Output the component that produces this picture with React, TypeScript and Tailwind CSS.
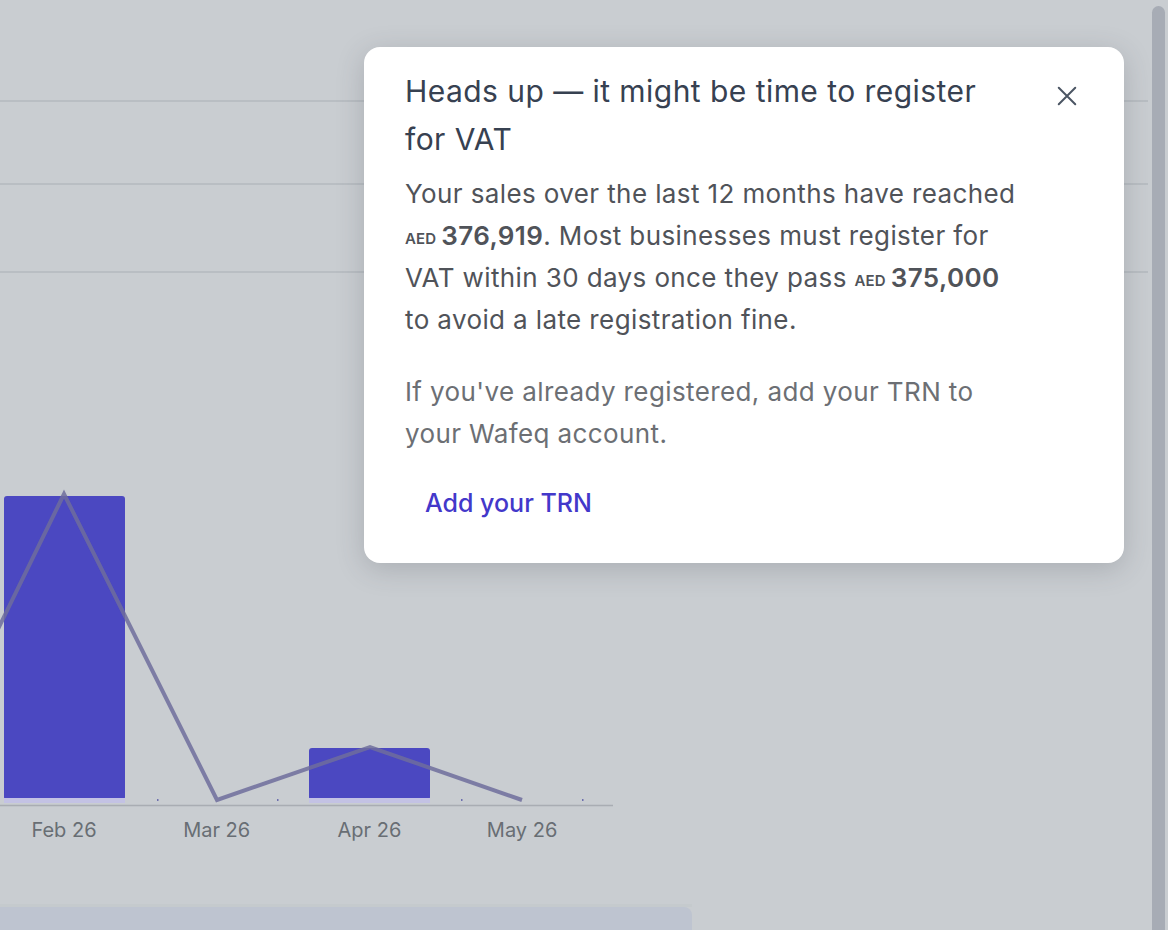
import React from "react";

const font = { fontFamily: "Inter, 'Noto Sans', sans-serif" };

function Amount({ value }: { value: string }) {
  return (
    <>
      <span className="inline-block text-[15px] leading-none font-semibold tracking-[0.01em] mr-[5px] align-[1px]">AED</span>
      <b className="font-semibold">{value}</b>
    </>
  );
}

function Chart() {
  const line = "-20,186 64,14 217,320 370,267 522,320";
  const labels = ["Feb 26", "Mar 26", "Apr 26", "May 26"];
  return (
    <div className="relative w-[620px]">
      <svg width="620" height="330" viewBox="0 0 620 330" className="block">
        <rect x="4" y="16" width="121" height="304" rx="3" fill="#4b48c1" />
        <rect x="4" y="318" width="121" height="5" fill="#c3c2e4" />
        <rect x="309" y="268" width="121" height="52" rx="3" fill="#4b48c1" />
        <rect x="309" y="318" width="121" height="5" fill="#c3c2e4" />
        {[157, 277, 461, 582].map((x) => (
          <rect key={x} x={x} y="319" width="1.5" height="2" fill="#6d6fae" />
        ))}
        <line x1="0" y1="325.5" x2="613" y2="325.5" stroke="#a9adb3" strokeWidth="1.5" />
        <polyline points={line} fill="none" stroke="#6f6d9c" strokeOpacity="0.85" strokeWidth="4" strokeLinejoin="miter" />
      </svg>
      <div className="relative h-[30px] mt-[5px] text-[20px] leading-[30px] text-[#686e74]">
        {labels.map((l, i) => (
          <div key={l} className="absolute top-0 w-[100px] text-center" style={{ left: 64 + i * 152.7 - 50 }}>
            {l}
          </div>
        ))}
      </div>
    </div>
  );
}

export default function App() {
  return (
    <div className="relative w-[1168px] h-[930px] overflow-hidden bg-[#c9cdd1]" style={font}>
      <div className="flex h-full">
        {/* page content under the dimmed backdrop */}
        <div className="flex flex-col w-[1148px] h-full">
          <div className="h-[102px] border-b-[2px] border-[#b9bec3]" />
          <div className="h-[83px] border-b-[2px] border-[#b9bec3]" />
          <div className="h-[88px] border-b-[2px] border-[#b9bec3]" />
          <div className="h-[207px]" />
          <Chart />
          <div className="flex-1" />
          <div className="h-[3px] w-[692px] bg-[#c5cacd]" />
          <div className="h-[23px] w-[692px] bg-[#bec4d0] rounded-tr-[8px]" />
        </div>
        <div className="flex-1 flex justify-center pt-[6px]">
          <div className="w-[13px] h-[940px] rounded-full bg-[#a7acb5]" />
        </div>
      </div>

      {/* VAT registration notice */}
      <div className="absolute left-[364px] top-[47px] w-[760px] h-[516px] bg-white rounded-[16px] shadow-[0_6px_28px_rgba(60,65,75,0.22)] pl-[41px] pr-[40px] pt-[20px]">
        <div className="flex justify-between items-start">
          <h2 className="w-[600px] text-[30px] leading-[48px] font-normal tracking-[0.015em] text-[#374151]">
            Heads up — it might be time to register for VAT
          </h2>
          <button className="mt-[18px] mr-[6px] text-[#4b5563]" aria-label="Close">
            <svg width="22" height="22" viewBox="0 0 24 24" fill="none" stroke="currentColor" strokeWidth="2.2" strokeLinecap="round">
              <path d="M3 3l18 18M21 3L3 21" />
            </svg>
          </button>
        </div>
        <p className="mt-[10px] w-[618px] text-[26px] leading-[42px] tracking-[0.015em] text-[#505359]">
          Your sales over the last 12 months have reached <Amount value="376,919" />. Most businesses must register for VAT within 30 days once they pass <Amount value="375,000" /> to avoid a late registration fine.
        </p>
        <p className="mt-[30px] w-[618px] text-[26px] leading-[42px] tracking-[0.015em] text-[#6c6f74]">
          If you've already registered, add your TRN to your Wafeq account.
        </p>
        <button className="block mt-[27px] ml-[20px] text-[25px] leading-[42px] font-medium text-[#4338ca]">
          Add your TRN
        </button>
      </div>
    </div>
  );
}
